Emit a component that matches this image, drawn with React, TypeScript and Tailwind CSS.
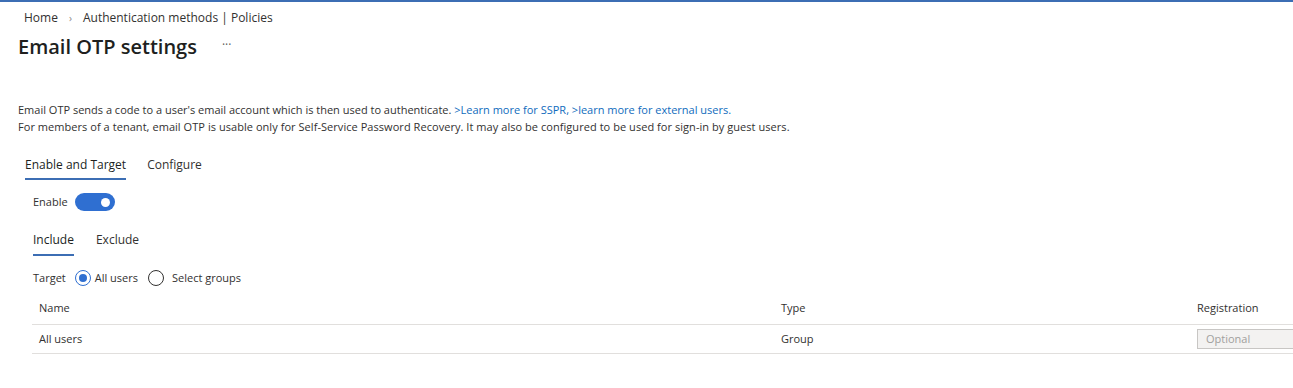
import React from "react";

export default function App() {
  return (
    <div
      className="w-[1293px] h-[388px] bg-white text-[#323130] overflow-hidden border-t-2 border-[#3c6eb4]"
      style={{ fontFamily: '"Open Sans", "Noto Sans", sans-serif' }}
    >
      {/* Breadcrumb */}
      <div className="flex items-center pl-[24px] pt-[7px] text-[12px] text-[#323130] leading-[18px]">
        <span>Home</span>
        <span className="mx-[11px] text-[#8a8886] text-[10px]">›</span>
        <span>Authentication methods | Policies</span>
      </div>
      {/* Title */}
      <div className="flex items-center pl-[18px] mt-[6px] h-[28px]">
        <h1 className="text-[20px] font-semibold leading-[28px] text-[#201f1e]">Email OTP settings</h1>
        <span className="ml-[25px] text-[12px] text-[#605e5c] leading-none -mt-[4px]">···</span>
      </div>
      {/* Description */}
      <div className="pl-[18px] mt-[40px] text-[11px] leading-[17px] text-[#323130]">
        <div>
          Email OTP sends a code to a user's email account which is then used to authenticate.{" "}
          <span className="text-[#0f6cbd]">&gt;Learn more for SSPR,</span>{" "}
          <span className="text-[#0f6cbd]">&gt;learn more for external users.</span>
        </div>
        <div className="tracking-[0.05px]">
          For members of a tenant, email OTP is usable only for Self-Service Password Recovery. It may also be configured to be used for sign-in by guest users.
        </div>
      </div>
      {/* Tabs */}
      <div className="flex pl-[25px] mt-[20px] text-[12px] gap-[21px]">
        <div className="flex flex-col">
          <span className="leading-[20px] text-[#201f1e]">Enable and Target</span>
          <div className="h-[2px] bg-[#3c6eb4] mt-[3px]" />
        </div>
        <div className="flex flex-col">
          <span className="leading-[20px] text-[#323130]">Configure</span>
        </div>
      </div>
      {/* Enable toggle */}
      <div className="flex items-center pl-[33px] mt-[13px] h-[18px] text-[11px]">
        <span>Enable</span>
        <div className="ml-[7px] w-[40px] h-[18px] rounded-full bg-[#2f6fd1] flex items-center justify-end pr-[5px]">
          <div className="w-[9px] h-[9px] rounded-full bg-white" />
        </div>
      </div>
      {/* Include / Exclude */}
      <div className="flex pl-[33px] mt-[19px] text-[12px] gap-[22px]">
        <div className="flex flex-col">
          <span className="leading-[20px] text-[#201f1e]">Include</span>
          <div className="h-[2px] bg-[#3c6eb4] mt-[4px]" />
        </div>
        <div className="flex flex-col">
          <span className="leading-[20px]">Exclude</span>
        </div>
      </div>
      {/* Target */}
      <div className="flex items-center pl-[33px] mt-[13px] h-[18px] text-[11px]">
        <span>Target</span>
        <div className="ml-[9px] w-[16px] h-[16px] rounded-full border border-[#2f6fd1] flex items-center justify-center">
          <div className="w-[8px] h-[8px] rounded-full bg-[#2f6fd1]" />
        </div>
        <span className="ml-[4px]">All users</span>
        <div className="ml-[10px] w-[16px] h-[16px] rounded-full border border-[#323130]" />
        <span className="ml-[8px]">Select groups</span>
      </div>
      {/* Table */}
      <div className="ml-[32px] mt-[6px] text-[11px]">
        <div className="grid grid-cols-[742px_416px_1fr] h-[32px] items-center border-b border-[#e1dfdd]">
          <div className="pl-[7px]">Name</div>
          <div className="pl-[7px]">Type</div>
          <div className="pl-[7px]">Registration</div>
        </div>
        <div className="grid grid-cols-[742px_416px_1fr] h-[29px] items-center border-b border-[#e1dfdd]">
          <div className="pl-[7px]">All users</div>
          <div className="pl-[7px]">Group</div>
          <div className="pl-[7px]">
            <div className="h-[20px] w-[110px] border border-[#c8c6c4] bg-[#f3f2f1] text-[#a19f9d] pl-[8px] leading-[18px]">
              Optional
            </div>
          </div>
        </div>
      </div>
    </div>
  );
}
